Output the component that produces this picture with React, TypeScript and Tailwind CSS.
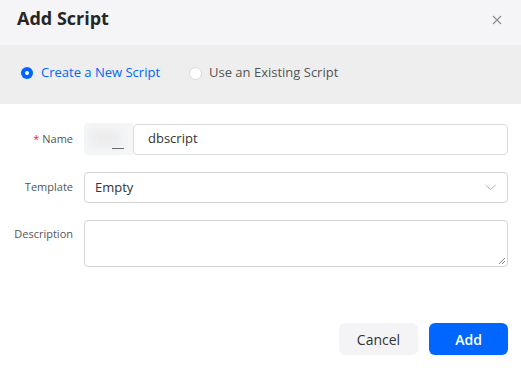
import React from "react";

export default function App() {
  const font = { fontFamily: '"Segoe UI", "Open Sans", "Noto Sans", sans-serif' };
  return (
    <div className="w-[521px] h-[368px] bg-white flex flex-col" style={font}>
      <div className="h-[45px] bg-[#f5f5f7] flex items-center justify-between pl-[17px] pr-[19px]">
        <div className="text-[18px] font-bold text-[#262626] leading-none -mt-[9px]">Add Script</div>
        <svg width="10" height="10" viewBox="0 0 10 10" className="-mt-[5px]">
          <path d="M1 1L9 9M9 1L1 9" stroke="#8c8c8c" strokeWidth="1.1" />
        </svg>
      </div>
      <div className="h-[59px] bg-[#eeeeee] flex items-center pl-[21px] text-[13px]">
        <div className="flex items-center gap-[8px] -mt-[3px]">
          <span className="w-[12px] h-[12px] rounded-full bg-[#0066ff] flex items-center justify-center">
            <span className="w-[4px] h-[4px] rounded-full bg-white" />
          </span>
          <span className="text-[#0066ff]">Create a New Script</span>
        </div>
        <div className="flex items-center gap-[7px] ml-[29px] -mt-[3px]">
          <span className="w-[13px] h-[13px] rounded-full bg-white border border-[#d9d9d9]" />
          <span className="text-[#555]">Use an Existing Script</span>
        </div>
      </div>
      <div className="flex flex-col pt-[19px] pr-[13px]">
        <div className="flex items-center h-[32px]">
          <div className="w-[73px] text-right text-[11px] text-[#555]">
            <span className="text-[#f5222d] mr-[3px]">*</span>Name
          </div>
          <div className="ml-[11px] w-[49px] h-[32px] bg-[#f5f6f8] rounded-l-[4px] relative overflow-hidden">
            <div className="absolute left-[6px] top-[6px] w-[30px] h-[18px] bg-[#ececec] blur-[4px]" />
            <div className="absolute left-[28px] top-[25px] w-[12px] h-[1px] bg-[#6b6b6b]" />
          </div>
          <div className="flex-1 h-[31px] border border-[#dcdcdc] rounded-[4px] flex items-center pl-[14px] text-[13px] text-[#333]">
            dbscript
          </div>
        </div>
        <div className="flex items-center h-[31px] mt-[17px]">
          <div className="w-[73px] text-right text-[11px] text-[#555]">Template</div>
          <div className="ml-[11px] flex-1 h-[31px] border border-[#d4d4d4] rounded-[4px] flex items-center justify-between pl-[10px] pr-[11px] text-[13px] text-[#333]">
            <span>Empty</span>
            <svg width="11" height="7" viewBox="0 0 11 7">
              <path d="M0.5 1L5.5 5.5L10.5 1" stroke="#b0b0b0" strokeWidth="1" fill="none" />
            </svg>
          </div>
        </div>
        <div className="flex items-start mt-[17px]">
          <div className="w-[73px] text-right text-[11px] text-[#555] pt-[6px]">Description</div>
          <div className="ml-[11px] flex-1 h-[47px] border border-[#d4d4d4] rounded-[4px] relative">
            <svg width="8" height="8" viewBox="0 0 8 8" className="absolute right-[1px] bottom-[1px]">
              <path d="M7 1L1 7M7 4L4 7" stroke="#777" strokeWidth="0.9" />
            </svg>
          </div>
        </div>
      </div>
      <div className="flex justify-end gap-[11px] pr-[13px] mt-[56px]">
        <div className="w-[79px] h-[32px] rounded-[6px] bg-[#f4f4f6] flex items-center justify-center text-[14px] text-[#333]">
          Cancel
        </div>
        <div className="w-[79px] h-[32px] rounded-[6px] bg-[#0066ff] flex items-center justify-center text-[14px] font-semibold text-white">
          Add
        </div>
      </div>
    </div>
  );
}
